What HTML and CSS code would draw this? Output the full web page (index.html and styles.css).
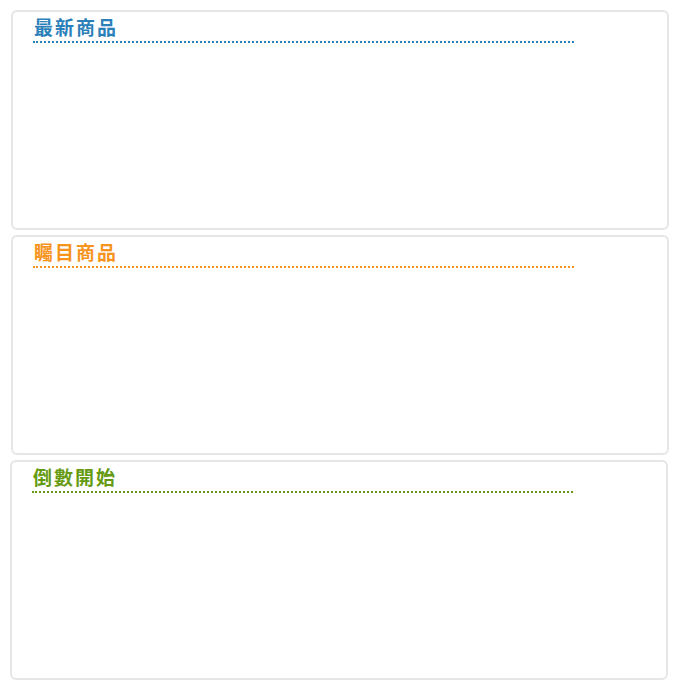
FILE: index.html
```html
<!DOCTYPE html>
<html lang="zh-Hant">
<head>
<meta charset="utf-8">
<title>商品</title>
<link rel="stylesheet" href="styles.css">
</head>
<body>
<div class="page">
  <section class="panel panel-blue">
    <h2 class="panel-title">最新商品</h2>
  </section>
  <section class="panel panel-orange">
    <h2 class="panel-title">矚目商品</h2>
  </section>
  <section class="panel panel-green panel-shift">
    <h2 class="panel-title">倒數開始</h2>
  </section>
</div>
</body>
</html>
```
FILE: styles.css
```css
html, body {
  margin: 0;
  padding: 0;
  background: #ffffff;
}
.page {
  padding: 10px 0 0 11px;
  display: flex;
  flex-direction: column;
  gap: 5px;
}
.panel {
  box-sizing: border-box;
  width: 658px;
  height: 220px;
  border: 2px solid #e6e6e6;
  border-radius: 6px;
  background: #fff;
}
.panel-shift {
  margin-left: -1px;
}
.panel-title {
  box-sizing: border-box;
  margin: 5px 0 0 20px;
  width: 541px;
  height: 26px;
  padding-left: 1px;
  font-family: "Noto Sans CJK TC", "Noto Sans CJK SC", sans-serif;
  font-size: 19px;
  font-weight: bold;
  line-height: 20px;
  letter-spacing: 2px;
  border-bottom: 2px dotted;
}
.panel-blue .panel-title { color: #2b80b9; border-color: #2b80b9; }
.panel-orange .panel-title { color: #f7941d; border-color: #f7941d; }
.panel-green .panel-title { color: #659a12; border-color: #659a12; }
```
